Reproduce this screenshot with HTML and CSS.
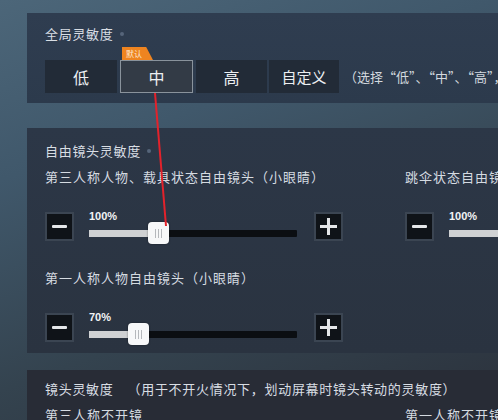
FILE: index.html
```html
<!DOCTYPE html>
<html lang="zh">
<head>
<meta charset="utf-8">
<link rel="stylesheet" href="styles.css">
</head>
<body>
<div class="screen">
  <section class="panel p1">
    <div class="title">全局灵敏度<span class="dot"></span></div>
    <div class="seg-row">
      <div class="seg">
        <div class="opt">低</div>
        <div class="opt sel"><span class="tag">默认</span>中</div>
        <div class="opt">高</div>
        <div class="opt small">自定义</div>
      </div>
      <div class="desc">（选择“低”、“中”、“高”，使用系统预设的灵敏度）</div>
    </div>
  </section>

  <section class="panel p2">
    <div class="title">自由镜头灵敏度<span class="dot"></span></div>
    <div class="cols">
      <div class="group">
        <div class="label">第三人称人物、载具状态自由镜头（小眼睛）</div>
        <div class="slider">
          <div class="btn"><span class="minus"></span></div>
          <div class="track-wrap">
            <div class="pct">100%</div>
            <div class="track"><div class="fill" style="width:33%"></div><div class="thumb" style="left:33%"><i></i><i></i><i></i></div></div>
          </div>
          <div class="btn"><span class="plus"></span></div>
        </div>
        <div class="label second">第一人称人物自由镜头（小眼睛）</div>
        <div class="slider">
          <div class="btn"><span class="minus"></span></div>
          <div class="track-wrap">
            <div class="pct">70%</div>
            <div class="track"><div class="fill" style="width:23.5%"></div><div class="thumb" style="left:23.5%"><i></i><i></i><i></i></div></div>
          </div>
          <div class="btn"><span class="plus"></span></div>
        </div>
      </div>
      <div class="group">
        <div class="label">跳伞状态自由镜头（小眼睛）</div>
        <div class="slider">
          <div class="btn"><span class="minus"></span></div>
          <div class="track-wrap">
            <div class="pct">100%</div>
            <div class="track"><div class="fill" style="width:33%"></div></div>
          </div>
        </div>
      </div>
    </div>
  </section>

  <section class="panel p3">
    <div class="title">镜头灵敏度<span class="note">（用于不开火情况下，划动屏幕时镜头转动的灵敏度）</span></div>
    <div class="cols">
      <div class="group"><div class="label">第三人称不开镜</div></div>
      <div class="group"><div class="label">第一人称不开镜</div></div>
    </div>
  </section>

  <svg class="arrow" width="498" height="420" viewBox="0 0 498 420">
    <line x1="155" y1="93" x2="166" y2="226" stroke="#e3222b" stroke-width="2"/>
  </svg>
</div>
</body>
</html>
```
FILE: styles.css
```css
* { box-sizing: border-box; }
html, body { margin: 0; padding: 0; }
body {
  width: 498px;
  height: 420px;
  overflow: hidden;
  font-family: "Noto Sans CJK SC", "Noto Sans", sans-serif;
  color: #d9dee4;
}
.screen {
  position: relative;
  width: 498px;
  height: 420px;
  overflow: hidden;
  padding: 13px 0 0 27px;
  background: linear-gradient(160deg, #4c6679 0%, #40586b 30%, #34434f 65%, #2b313b 100%);
}
.panel {
  padding-left: 18px;
  white-space: nowrap;
}
.p1 {
  height: 90px;
  padding-top: 12px;
  background: linear-gradient(180deg, #2f3d50, #2c3a4c);
}
.p2 {
  margin-top: 25px;
  height: 225px;
  padding-top: 14px;
  background: linear-gradient(180deg, #2c3747 0%, #2a3340 100%);
}
.p3 {
  margin-top: 17px;
  height: 60px;
  padding-top: 10px;
  background: #282c36;
}
.title {
  font-size: 13px;
  line-height: 18px;
  letter-spacing: 0.7px;
  display: flex;
  align-items: center;
}
.dot {
  width: 4px;
  height: 4px;
  border-radius: 50%;
  background: #56657a;
  margin-left: 6px;
}
.note { margin-left: 14px; }
.seg-row {
  display: flex;
  align-items: center;
  margin-top: 17px;
}
.seg { display: flex; gap: 2px; }
.opt {
  position: relative;
  height: 33px;
  width: 71px;
  background: #222b37;
  display: flex;
  align-items: center;
  justify-content: center;
  font-size: 16px;
  color: #eceff2;
}
.opt:first-child { width: 72px; }
.opt.sel {
  width: 73px;
  background: #333b46;
  border: 1px solid #8a939c;
  margin-left: 1px;
  margin-right: 1px;
}
.opt.small { font-size: 15px; width: 70px; }
.tag {
  position: absolute;
  left: 1px;
  top: -14px;
  width: 31px;
  height: 13px;
  background: #ee8420;
  font-size: 8px;
  line-height: 13px;
  padding-left: 4px;
  color: #fde7cf;
  clip-path: polygon(0 0, 78% 0, 100% 100%, 0 100%);
}
.desc {
  margin-left: 5px;
  font-size: 13px;
  color: #d3d9df;
}
.cols {
  display: flex;
  gap: 62px;
}
.group { flex: none; }
.cols .group:first-child { width: 298px; }
.label {
  margin-top: 8px;
  font-size: 13px;
  line-height: 18px;
  letter-spacing: 1px;
  color: #d5dbe1;
}
.label.second { margin-top: 28px; }
.slider {
  display: flex;
  align-items: center;
  margin-top: 25px;
  height: 30px;
}
.btn {
  width: 29px;
  height: 29px;
  background: #0f1318;
  border: 2px solid #3b4552;
  display: flex;
  align-items: center;
  justify-content: center;
  position: relative;
  flex: none;
}
.minus {
  width: 15px;
  height: 3px;
  background: #e4e6e8;
  border-radius: 1px;
}
.plus {
  position: relative;
  width: 17px;
  height: 17px;
}
.plus::before, .plus::after {
  content: "";
  position: absolute;
  background: #e4e6e8;
}
.plus::before { left: 0; top: 7px; width: 17px; height: 3px; }
.plus::after { left: 7px; top: 0; width: 3px; height: 17px; }
.track-wrap {
  width: 210px;
  margin: 0 17px 0 15px;
  display: flex;
  flex-direction: column;
  align-self: stretch;
}
.pct {
  font-family: "Liberation Sans", sans-serif;
  font-weight: bold;
  font-size: 11px;
  line-height: 12px;
  color: #f2f4f6;
  margin-top: -1px;
}
.track {
  position: relative;
  margin-top: 8px;
  height: 7px;
  background: #0b0e12;
  border-radius: 1px;
}
.fill {
  height: 100%;
  background: #cfd1d3;
}
.thumb {
  position: absolute;
  top: -8px;
  width: 21px;
  height: 22px;
  margin-left: -10px;
  background: #f7f8f9;
  border-radius: 4px;
  box-shadow: 0 0 2px rgba(0,0,0,0.5);
  display: flex;
  align-items: center;
  justify-content: center;
  gap: 2px;
}
.thumb i {
  display: block;
  width: 1px;
  height: 9px;
  background: #b5b8bc;
}
.arrow {
  position: absolute;
  left: 0;
  top: 0;
  pointer-events: none;
}
```
